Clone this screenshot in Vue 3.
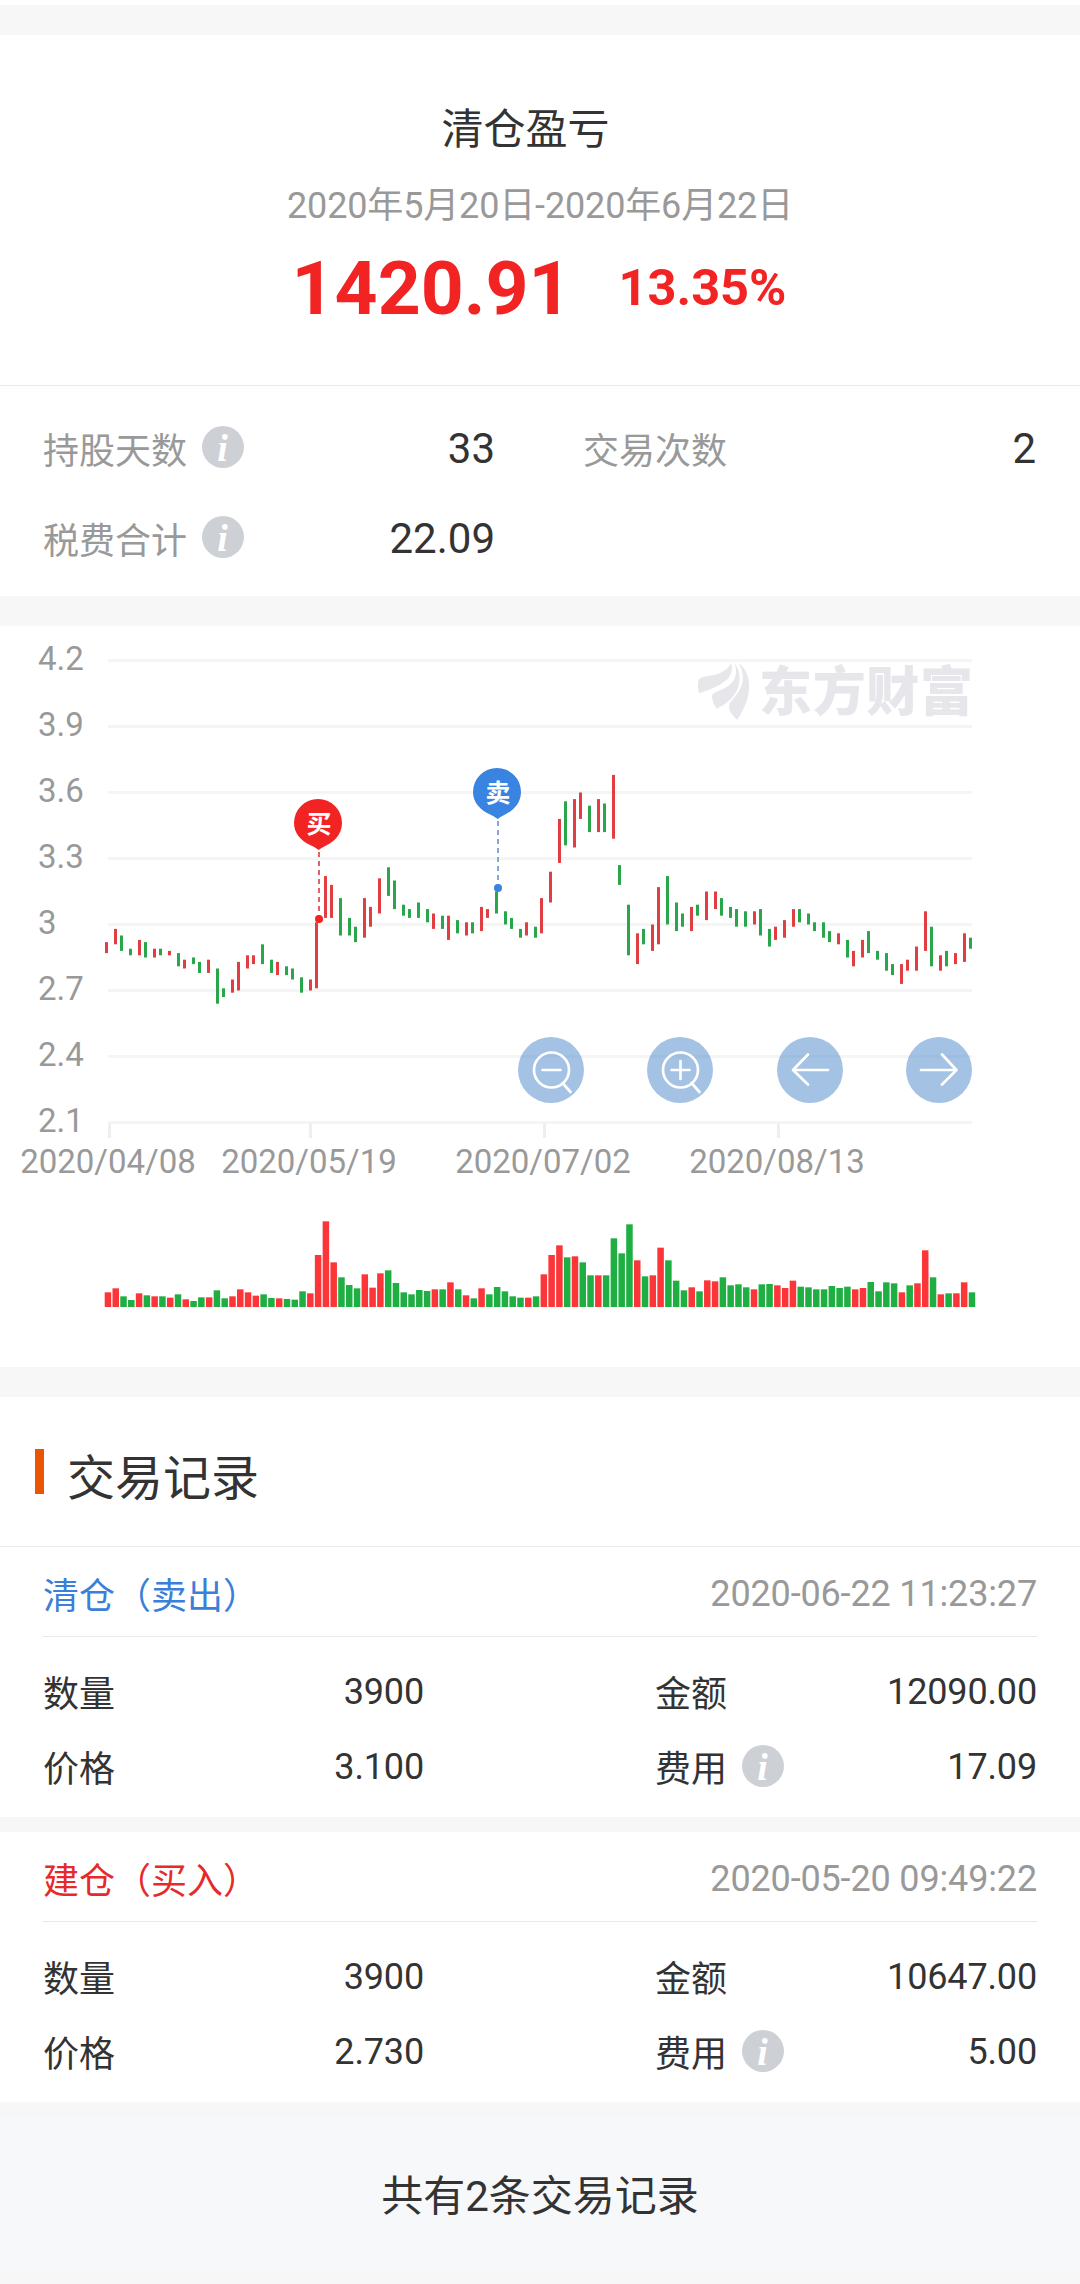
<template>
    <div class="page">
        <section class="summary">
            <h2>清仓盈亏</h2>
            <p class="period">2020年5月20日-2020年6月22日</p>
            <div class="profit">
                <span class="amount">1420.91</span>
                <span class="percent">13.35%</span>
            </div>
        </section>

        <section class="stats">
            <div v-for="item in stats" :key="item.label" class="stat">
                <span class="label">{{ item.label }}</span>
                <svg v-if="item.info" class="info" viewBox="0 0 42 42">
                    <circle cx="21" cy="21" r="21" />
                    <text x="20.5" y="34.5">i</text>
                </svg>
                <span class="value">{{ item.value }}</span>
            </div>
        </section>

        <section class="chart">
            <svg width="1080" height="741" viewBox="0 626 1080 741">
                <!-- grid and axes -->
                <g v-for="p in priceTicks" :key="p">
                    <rect class="grid" x="108" :y="priceY(p) - 1.5" width="864" height="3" />
                    <text class="axis" x="38" :y="priceY(p) + 9.5">{{ p }}</text>
                </g>
                <g v-for="t in dateTicks" :key="t.label">
                    <rect class="tick" :x="t.x - 1.5" y="1123" width="3" height="15" />
                    <text class="axis date" :x="t.x - 1.5" y="1173">{{ t.label }}</text>
                </g>

                <!-- watermark -->
                <g class="watermark">
                    <g transform="translate(660 640) scale(0.33333)">
                        <path d="M214 70C225 116 186 137 117 160Q111 140 115 122Q118 112 140 109Q196 103 214 70Z" />
                        <path d="M224 68C254 116 240 172 170 206Q158 190 155 170Q156 160 170 155C221 137 236 112 224 68Z" />
                        <path d="M237 70C277 100 280 172 231 239Q210 220 207 204Q206 190 218 178C250 148 258 108 237 70Z" />
                    </g>
                    <text x="759" y="711" textLength="214">东方财富</text>
                </g>

                <!-- candles -->
                <rect v-for="(c, i) in candles" :key="'c' + i" :class="c[2] ? 'up' : 'down'" :x="candleX(i)"
                    :y="priceY(c[0])" width="3" :height="priceY(c[1]) - priceY(c[0])" />

                <!-- volume -->
                <rect v-for="(c, i) in candles" :key="'v' + i" :class="volumeUp(c, i) ? 'vol-up' : 'vol-down'"
                    :x="104.7 + i * step" :y="1307 - c[3] / 3" width="6.5" :height="c[3] / 3" />

                <!-- buy and sell pins -->
                <g v-for="m in markers" :key="m.text" :fill="m.color" :transform="`translate(${m.x} ${m.y})`">
                    <path d="M0 -24A24 24 0 0 1 24 0C24 12 15 19 9 22Q4 24.500 0.700 27Q-3 24 -9 21.500C-16 18 -24 11 -24 0A24 24 0 0 1 0 -24Z" />
                    <path :d="`M1 29V${m.stem}`" :stroke="m.line" stroke-width="2" stroke-dasharray="5 4" />
                    <circle cx="1" :cy="m.stem + 1" r="4" />
                    <text class="pin" x="1" y="9.500">{{ m.text }}</text>
                </g>

                <!-- zoom and pan buttons -->
                <g v-for="b in buttons" :key="b.x" class="tool" :transform="`translate(${b.x} 1070)`">
                    <circle r="33" />
                    <path :d="b.icon" />
                </g>
            </svg>
        </section>

        <section class="records">
            <h3>交易记录</h3>
            <div v-for="r in records" :key="r.time" class="record">
                <div class="record-head">
                    <span class="title" :class="r.type">{{ r.title }}</span>
                    <span class="time">{{ r.time }}</span>
                </div>
                <div class="record-body">
                    <span class="name">数量</span>
                    <span class="num">{{ r.count }}</span>
                    <span class="name second">金额</span>
                    <span class="num">{{ r.total }}</span>
                    <span class="name">价格</span>
                    <span class="num">{{ r.price }}</span>
                    <span class="name second">
                        费用
                        <svg class="info" viewBox="0 0 42 42">
                            <circle cx="21" cy="21" r="21" />
                            <text x="20.5" y="34.5">i</text>
                        </svg>
                    </span>
                    <span class="num">{{ r.fee }}</span>
                </div>
            </div>
        </section>

        <footer>共有{{ records.length }}条交易记录</footer>
    </div>
</template>

<script setup>
const stats = [
    { label: '持股天数', value: '33', info: true },
    { label: '交易次数', value: '2' },
    { label: '税费合计', value: '22.09', info: true },
];

const records = [
    { type: 'sell', title: '清仓（卖出）', time: '2020-06-22 11:23:27', count: '3900', total: '12090.00', price: '3.100', fee: '17.09' },
    { type: 'buy', title: '建仓（买入）', time: '2020-05-20 09:49:22', count: '3900', total: '10647.00', price: '2.730', fee: '5.00' },
];

const priceTicks = [4.2, 3.9, 3.6, 3.3, 3, 2.7, 2.4, 2.1];
const dateTicks = [
    { x: 109.5, label: '2020/04/08' },
    { x: 310.5, label: '2020/05/19' },
    { x: 544.5, label: '2020/07/02' },
    { x: 778.5, label: '2020/08/13' },
];

const markers = [
    { text: '买', x: 318, y: 823, stem: 95, color: '#f12323', line: '#dc6466' },
    { text: '卖', x: 497, y: 792, stem: 95, color: '#3983e1', line: '#84a9d6' },
];

const lens = 'M18 0A17.500 17.500 0 1 1 -17 0A17.500 17.500 0 1 1 18 0M11.500 13L19.500 22';
const buttons = [
    { x: 551, icon: lens + 'M-8.500 0H9.500' },
    { x: 680, icon: lens + 'M-8.500 0H9.500M0.500 -9V9' },
    { x: 810, icon: 'M18 0H-17M-2 -15.500L-17 0L-2 14.500' },
    { x: 939, icon: 'M-18 0H17M3 -15.500L17.500 0L3 14.500' },
];

// high, low, rising, volume
const candles = [
    [2.92, 2.87, 1, 44], [2.98, 2.91, 1, 56], [2.95, 2.88, 0, 32], [2.89, 2.86, 0, 21],
    [2.93, 2.86, 1, 41], [2.92, 2.85, 0, 35], [2.89, 2.85, 1, 32], [2.89, 2.86, 0, 32],
    [2.88, 2.86, 1, 28], [2.87, 2.81, 0, 38], [2.84, 2.80, 1, 23], [2.85, 2.82, 0, 18],
    [2.83, 2.78, 0, 29], [2.84, 2.78, 1, 29], [2.80, 2.64, 0, 50], [2.71, 2.67, 0, 26],
    [2.75, 2.69, 1, 32], [2.83, 2.70, 1, 53], [2.86, 2.80, 1, 44], [2.86, 2.82, 1, 34],
    [2.91, 2.82, 0, 38], [2.84, 2.78, 0, 27], [2.83, 2.77, 1, 26], [2.81, 2.77, 0, 24],
    [2.80, 2.75, 0, 22], [2.76, 2.69, 0, 47], [2.75, 2.70, 1, 41], [3.01, 2.71, 1, 156],
    [3.22, 3.03, 1, 257], [3.18, 3.03, 1, 134], [3.12, 2.95, 0, 89], [3.03, 2.95, 0, 66],
    [2.99, 2.92, 0, 56], [3.12, 2.94, 1, 98], [3.08, 2.99, 1, 58], [3.21, 3.05, 1, 101],
    [3.26, 3.13, 0, 110], [3.20, 3.07, 0, 72], [3.09, 3.04, 0, 44], [3.07, 3.03, 0, 38],
    [3.10, 3.03, 0, 51], [3.07, 3.01, 0, 48], [3.05, 2.98, 1, 53], [3.04, 2.98, 0, 53],
    [3.04, 2.93, 1, 74], [3.02, 2.96, 0, 53], [3.01, 2.95, 1, 35], [3.01, 2.96, 0, 26],
    [3.08, 2.97, 1, 56], [3.07, 3.03, 1, 38], [3.15, 3.05, 0, 60], [3.06, 3.00, 0, 47],
    [3.03, 2.98, 0, 32], [2.98, 2.94, 0, 28], [3.01, 2.95, 1, 28], [2.99, 2.94, 0, 32],
    [3.12, 2.96, 1, 98], [3.24, 3.10, 1, 156], [3.48, 3.28, 1, 185], [3.56, 3.36, 0, 149],
    [3.57, 3.35, 1, 152], [3.60, 3.48, 1, 134], [3.54, 3.42, 0, 95], [3.57, 3.42, 1, 95],
    [3.55, 3.42, 0, 95], [3.68, 3.39, 1, 206], [3.27, 3.18, 0, 161], [3.09, 2.86, 0, 248],
    [2.96, 2.82, 1, 140], [2.98, 2.91, 0, 92], [3.00, 2.88, 1, 95], [3.17, 2.91, 1, 178],
    [3.22, 3.00, 0, 140], [3.10, 2.97, 0, 79], [3.05, 2.99, 0, 50], [3.08, 2.97, 1, 59],
    [3.09, 3.04, 0, 47], [3.15, 3.02, 1, 80], [3.15, 3.07, 1, 77], [3.12, 3.04, 0, 89],
    [3.08, 3.03, 0, 65], [3.07, 2.99, 0, 68], [3.06, 2.99, 0, 59], [3.06, 3.00, 1, 53],
    [3.07, 2.95, 0, 68], [2.98, 2.90, 0, 69], [2.99, 2.93, 1, 65], [3.02, 2.94, 1, 57],
    [3.07, 2.99, 1, 79], [3.07, 3.01, 0, 61], [3.05, 3.00, 0, 59], [3.01, 2.97, 0, 53],
    [3.01, 2.94, 0, 53], [2.97, 2.92, 0, 63], [2.96, 2.91, 1, 57], [2.93, 2.85, 0, 61],
    [2.88, 2.81, 1, 53], [2.93, 2.85, 1, 57], [2.97, 2.87, 0, 75], [2.88, 2.84, 0, 47],
    [2.87, 2.79, 0, 74], [2.82, 2.77, 0, 71], [2.82, 2.73, 1, 44], [2.84, 2.79, 1, 65],
    [2.90, 2.79, 1, 71], [3.06, 2.88, 1, 170], [2.99, 2.81, 0, 89], [2.86, 2.79, 1, 38],
    [2.88, 2.81, 0, 41], [2.87, 2.82, 1, 41], [2.96, 2.83, 1, 74], [2.94, 2.89, 0, 44],
];

// flat days: the volume bar is green although the candle is red
const flatDays = [49, 61, 65, 94, 103];

const step = 864 / 111;

const priceY = (price) => 660.5 + (4.2 - price) * 220;
const candleX = (i) => 105 + Math.round((i * step + 0.6) / 3) * 3;
const volumeUp = (candle, i) => candle[2] && !flatDays.includes(i);
</script>

<style>
body {
    margin: 0;
    background-color: #f7f8fa;
}
</style>

<style scoped>
.page {
    width: 1080px;
    height: 2284px;
    box-sizing: border-box;
    border-top: 5px solid #fff;
    background-color: #f7f7f7;
    color: #333;
    font-family: Roboto, "Noto Sans CJK SC", sans-serif;
    font-size: 36px;
    line-height: 48px;
    overflow: hidden;
}

h2,
h3,
p {
    margin: 0;
    font-weight: 400;
}

section {
    background-color: #fff;
}

.summary {
    height: 350px;
    margin-top: 30px;
    padding-top: 65px;
    box-sizing: border-box;
    text-align: center;
}

.summary h2 {
    padding-right: 29px;
    font-size: 42px;
    line-height: 60px;
}

.period {
    margin-top: 22px;
    color: #999;
    letter-spacing: -0.15px;
}

.profit {
    display: flex;
    justify-content: center;
    align-items: center;
    gap: 47px;
    margin-top: 13px;
    padding-right: 2px;
    line-height: 90px;
    color: #f12323;
}

.amount {
    font-size: 75px;
    font-weight: 700;
}

.percent {
    font-size: 50.5px;
    font-weight: 700;
}

.stats {
    display: grid;
    grid-template-columns: 452px 453px;
    grid-auto-rows: 90px;
    column-gap: 88px;
    height: 211px;
    padding: 18px 43px 0;
    box-sizing: border-box;
    border-top: 1px solid #e9e9e9;
}

.stat {
    display: flex;
    align-items: center;
    height: 90px;
}

.label {
    padding-top: 6px;
    color: #999;
}

.info {
    width: 42px;
    height: 42px;
    margin: 0 0 4px 15px;
}

.info circle {
    fill: #cdd0d5;
}

.info text {
    fill: #fff;
    font: italic 700 38px "Liberation Serif", serif;
    text-anchor: middle;
}

.value {
    margin-left: auto;
    font-size: 42px;
}

.chart {
    height: 741px;
    margin-top: 30px;
}

.chart svg {
    display: block;
}

.grid {
    fill: #f5f5f5;
}

.tick {
    fill: #eee;
}

.axis {
    fill: #999;
    font-size: 33px;
}

.date {
    text-anchor: middle;
}

.watermark {
    fill: #e6e6eb;
}

.watermark text {
    font-size: 53px;
    font-weight: 900;
}

.up {
    fill: #e23e41;
}

.down {
    fill: #2aa64a;
}

.vol-up {
    fill: #fb3538;
}

.vol-down {
    fill: #1eae42;
}

.pin {
    fill: #fff;
    font-size: 25px;
    font-weight: 700;
    text-anchor: middle;
}

.tool circle {
    fill: #4a86c8;
    opacity: 0.5;
}

.tool path {
    fill: none;
    stroke: #fff;
    stroke-width: 2.7;
    stroke-linecap: round;
    stroke-linejoin: round;
}

.records {
    margin-top: 30px;
}

.records h3 {
    display: flex;
    height: 149px;
    padding-top: 52px;
    box-sizing: border-box;
    font-size: 48px;
    line-height: 60px;
}

.records h3::before {
    content: "";
    width: 9px;
    height: 45px;
    margin: 0 23px 0 35px;
    background-color: #e95504;
}

.record {
    height: 271px;
    padding: 0 43px;
    box-sizing: border-box;
    border-top: 1px solid #e9e9e9;
}

.record + .record {
    height: 285px;
    border-top: 15px solid #f7f7f7;
}

.record-head {
    display: flex;
    justify-content: space-between;
    align-items: center;
    height: 90px;
    padding-top: 4px;
    box-sizing: border-box;
    border-bottom: 1px solid #e9e9e9;
}

.title {
    padding-top: 6px;
}

.sell {
    color: #3a80d9;
}

.buy {
    color: #e62a2a;
}

.time {
    color: #999;
    letter-spacing: -0.15px;
}

.record-body {
    display: grid;
    grid-template-columns: 191px 190px 391px 222px;
    grid-auto-rows: 75px;
    align-items: center;
    padding-top: 17px;
}

.name {
    display: flex;
    align-items: center;
    padding-top: 6px;
}

.second {
    padding-left: 231px;
}

.name .info {
    margin-bottom: 8px;
}

.num {
    text-align: right;
    letter-spacing: -0.15px;
}

footer {
    height: 153px;
    margin-top: 15px;
    background-color: #f7f8fa;
    font-size: 42px;
    line-height: 159px;
    text-align: center;
}
</style>
